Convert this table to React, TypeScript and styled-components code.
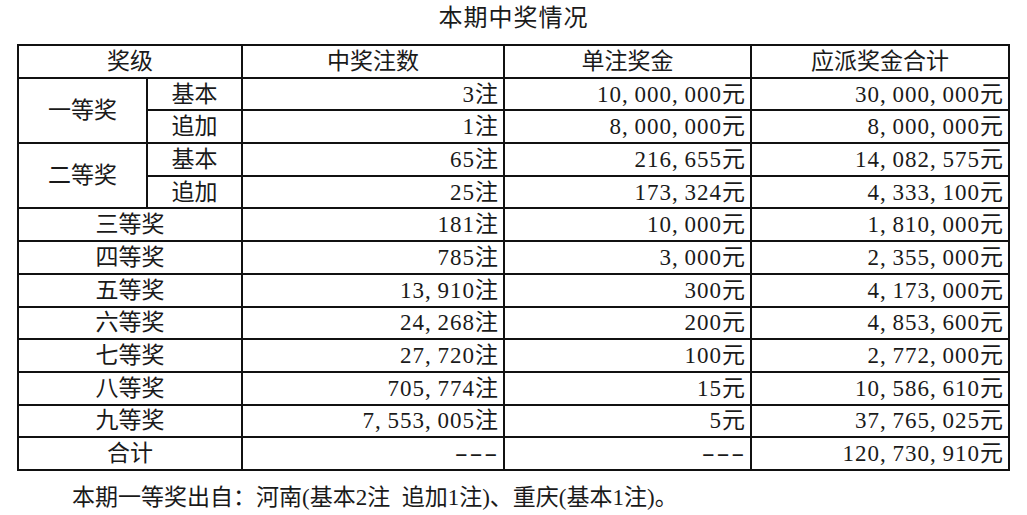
import styled, { createGlobalStyle } from "styled-components";
import { Fragment } from "react";

const GlobalStyle = createGlobalStyle`
    html, body {
        margin: 0;
        padding: 0;
        background: #ffffff;
    }
    body {
        font-family: "Liberation Serif", "Noto Sans CJK SC", serif;
        color: #1a1a1a;
    }
`;

const Page = styled.main`
    width: 1027px;
    height: 515px;
    overflow: hidden;
`;

const Title = styled.h1`
    margin: 0;
    height: 44px;
    line-height: 36px;
    font-size: 24px;
    font-weight: 400;
    text-align: center;
    letter-spacing: 1px;
`;

const Table = styled.table`
    width: 991px;
    margin: 0 auto;
    border-collapse: collapse;
    table-layout: fixed;
    font-size: 23px;
    border: 2px solid #111;
    td, th {
        border: 2px solid #111;
        height: 30.7px;
        padding: 0 4px;
        font-weight: 400;
        line-height: 1;
        white-space: nowrap;
    }
`;

const Cell = styled.td<{ $align?: "left" | "center" | "right" }>`
    text-align: ${(p) => p.$align ?? "center"};
`;

const Num = styled.span`
    letter-spacing: 1px;
`;

const Comma = styled.span`
    display: inline-block;
    width: 0.5em;
    text-align: left;
    letter-spacing: 0;
    margin-right: 1px;
`;

const Dash = styled.span`
    display: inline-block;
    letter-spacing: 1px;
    transform: scaleX(1.7);
    transform-origin: right center;
`;

const Footer = styled.p`
    margin: 14px 0 0;
    padding-left: 72px;
    font-size: 23px;
    line-height: 26px;
    white-space: pre;
`;

interface IRow {
    level: string;
    sub?: string;
    span?: number;
    count: string;
    prize: string;
    total: string;
}

const rows: IRow[] = [
    { level: "一等奖", sub: "基本", span: 2, count: "3注", prize: "10,000,000元", total: "30,000,000元" },
    { level: "一等奖", sub: "追加", count: "1注", prize: "8,000,000元", total: "8,000,000元" },
    { level: "二等奖", sub: "基本", span: 2, count: "65注", prize: "216,655元", total: "14,082,575元" },
    { level: "二等奖", sub: "追加", count: "25注", prize: "173,324元", total: "4,333,100元" },
    { level: "三等奖", count: "181注", prize: "10,000元", total: "1,810,000元" },
    { level: "四等奖", count: "785注", prize: "3,000元", total: "2,355,000元" },
    { level: "五等奖", count: "13,910注", prize: "300元", total: "4,173,000元" },
    { level: "六等奖", count: "24,268注", prize: "200元", total: "4,853,600元" },
    { level: "七等奖", count: "27,720注", prize: "100元", total: "2,772,000元" },
    { level: "八等奖", count: "705,774注", prize: "15元", total: "10,586,610元" },
    { level: "九等奖", count: "7,553,005注", prize: "5元", total: "37,765,025元" },
    { level: "合计", count: "---", prize: "---", total: "120,730,910元" },
];

// 쉼표를 반각 폭으로 맞추고, 대시는 가로로 늘림
function Amount({ text }: { text: string }) {
    if (text === "---") return <Dash>{text}</Dash>;
    const parts = text.split(",");
    return (
        <Num>
            {parts.map((part, i) => (
                <Fragment key={i}>
                    {i > 0 && <Comma>,</Comma>}
                    {part}
                </Fragment>
            ))}
        </Num>
    );
}

export default function App() {
    return (
        <Page>
            <GlobalStyle />
            <Title>本期中奖情况</Title>
            <Table>
                <colgroup>
                    <col style={{ width: 129 }} />
                    <col style={{ width: 95 }} />
                    <col style={{ width: 262 }} />
                    <col style={{ width: 247 }} />
                    <col style={{ width: 258 }} />
                </colgroup>
                <thead>
                    <tr>
                        <Cell as="th" colSpan={2}>奖级</Cell>
                        <Cell as="th">中奖注数</Cell>
                        <Cell as="th">单注奖金</Cell>
                        <Cell as="th">应派奖金合计</Cell>
                    </tr>
                </thead>
                <tbody>
                    {rows.map((row, i) => (
                        <tr key={i}>
                            {row.sub ? (
                                <>
                                    {row.span && <Cell rowSpan={row.span}>{row.level}</Cell>}
                                    <Cell>{row.sub}</Cell>
                                </>
                            ) : (
                                <Cell colSpan={2}>{row.level}</Cell>
                            )}
                            <Cell $align="right"><Amount text={row.count} /></Cell>
                            <Cell $align="right"><Amount text={row.prize} /></Cell>
                            <Cell $align="right"><Amount text={row.total} /></Cell>
                        </tr>
                    ))}
                </tbody>
            </Table>
            <Footer>本期一等奖出自：河南(基本2注  追加1注)、重庆(基本1注)。</Footer>
        </Page>
    );
}
